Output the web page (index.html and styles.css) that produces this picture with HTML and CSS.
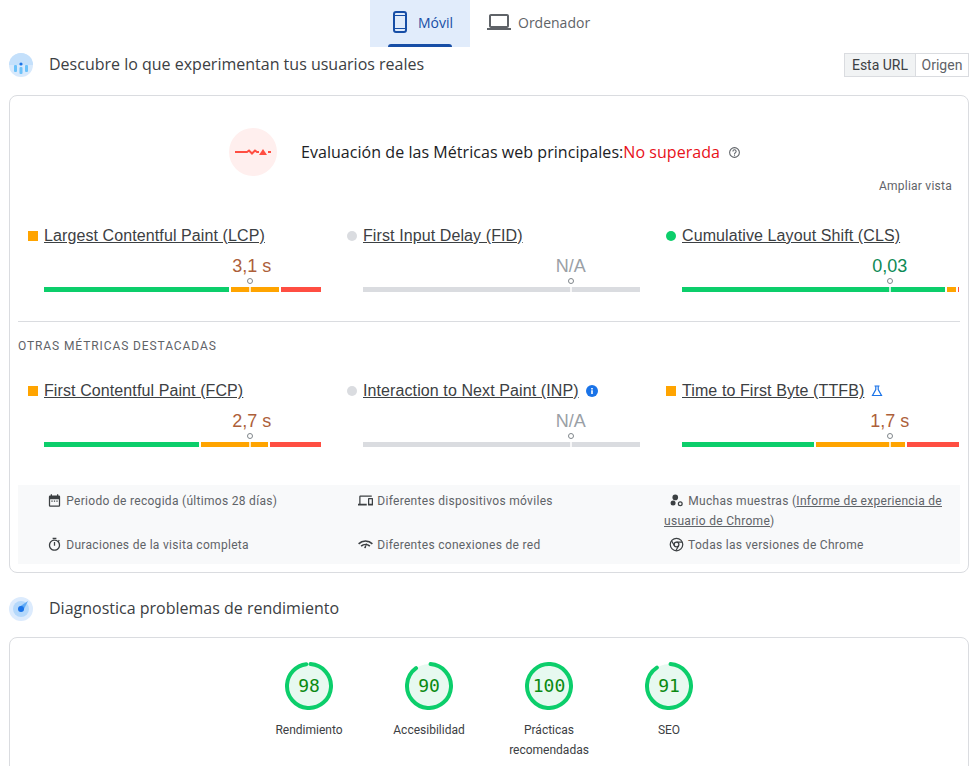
FILE: index.html
```html
<!DOCTYPE html>
<html lang="es">
  <head>
    <meta charset="UTF-8" />
    <title>PageSpeed Insights</title>
    <link rel="stylesheet" href="styles.css">
  </head>
  <body>
    <!-- Device tabs -->
    <nav class="tabs">
      <a class="tab active">
        <svg class="tab-icon" viewBox="0 0 24 24"><rect x="6" y="2" width="12" height="20" rx="2" fill="none" stroke="currentColor" stroke-width="2"/><path d="M6 5.500h12M6 18.500h12" stroke="currentColor" stroke-width="1"/></svg>
        Móvil
      </a>
      <a class="tab">
        <svg class="tab-icon" viewBox="0 0 24 24"><path fill="currentColor" d="M20 18c1.100 0 1.990-.9 1.990-2L22 6c0-1.100-.9-2-2-2H4c-1.100 0-2 .9-2 2v10c0 1.100.9 2 2 2H0v2h24v-2h-4zM4 6h16v10H4V6z"/></svg>
        Ordenador
      </a>
    </nav>

    <!-- Field data -->
    <header class="section-head">
      <svg class="section-icon" viewBox="0 0 24 24">
        <circle cx="12" cy="12" r="12" fill="#d7e9fc"/>
        <path d="M0 12a12 12 0 0 1 24 0z" fill="#c4e0fb"/>
        <circle cx="12" cy="11" r="1.600" fill="#1a73e8"/>
        <rect x="5" y="12" width="3" height="7" rx="1" fill="#6cc2fa"/>
        <rect x="10.500" y="14" width="3" height="7" rx="1" fill="#6cc2fa"/>
        <rect x="16" y="12" width="3" height="7" rx="1" fill="#6cc2fa"/>
      </svg>
      <h2 class="section-title">Descubre lo que experimentan tus usuarios reales</h2>
      <div class="toggle">
        <button class="toggle-btn selected">Esta URL</button>
        <button class="toggle-btn">Origen</button>
      </div>
    </header>

    <section class="card field-card">
      <div class="verdict">
        <svg class="verdict-icon" viewBox="0 0 48 48">
          <circle cx="24" cy="24" r="24" fill="#ffefee"/>
          <path d="M6 24h12l2-1.500 3 3 3-3 2 1.500h2M39 24h3" fill="none" stroke="#ff4e42" stroke-width="2"/>
          <path d="M30 27l4-6 4 6z" fill="#ff4e42"/>
        </svg>
        <span class="verdict-text">Evaluación de las Métricas web principales:<span class="failed">No superada</span></span>
        <svg class="help-icon" viewBox="0 0 24 24"><path fill="#5f6368" d="M11 18h2v-2h-2v2zm1-16a10 10 0 1 0 0 20 10 10 0 0 0 0-20zm0 18a8 8 0 1 1 0-16 8 8 0 0 1 0 16zm0-14a4 4 0 0 0-4 4h2a2 2 0 1 1 4 0c0 2-3 1.750-3 5h2c0-2.250 3-2.500 3-5a4 4 0 0 0-4-4z"/></svg>
      </div>
      <div class="expand">Ampliar vista</div>

      <div class="metrics">
        <div class="metric">
          <div class="metric-label"><i class="mark square"></i><a>Largest Contentful Paint (LCP)</a></div>
          <div class="metric-body">
            <div class="metric-value average" style="--pos: 75%">3,1 s</div>
            <div class="bar">
              <span class="seg good" style="flex-grow: 185"></span><span class="seg avg" style="flex-grow: 48"></span><span class="seg poor" style="flex-grow: 40"></span>
              <i class="pin" style="--pos: 74.5%"></i>
            </div>
          </div>
        </div>
        <div class="metric">
          <div class="metric-label"><i class="mark none"></i><a>First Input Delay (FID)</a></div>
          <div class="metric-body">
            <div class="metric-value empty" style="--pos: 75%">N/A</div>
            <div class="bar">
              <span class="seg blank" style="flex-grow: 1"></span>
              <i class="pin" style="--pos: 75%"></i>
            </div>
          </div>
        </div>
        <div class="metric">
          <div class="metric-label"><i class="mark circle"></i><a>Cumulative Layout Shift (CLS)</a></div>
          <div class="metric-body">
            <div class="metric-value fast" style="--pos: 75%">0,03</div>
            <div class="bar">
              <span class="seg good" style="flex-grow: 263"></span><span class="seg avg" style="flex-grow: 9"></span><span class="seg poor" style="flex-grow: 1"></span>
              <i class="pin" style="--pos: 75%"></i>
            </div>
          </div>
        </div>
      </div>

      <div class="divider"></div>
      <div class="subhead">Otras métricas destacadas</div>

      <div class="metrics metrics-other">
        <div class="metric">
          <div class="metric-label"><i class="mark square"></i><a>First Contentful Paint (FCP)</a></div>
          <div class="metric-body">
            <div class="metric-value average" style="--pos: 75%">2,7 s</div>
            <div class="bar">
              <span class="seg good" style="flex-grow: 155"></span><span class="seg avg" style="flex-grow: 67"></span><span class="seg poor" style="flex-grow: 51"></span>
              <i class="pin" style="--pos: 74.5%"></i>
            </div>
          </div>
        </div>
        <div class="metric">
          <div class="metric-label"><i class="mark none"></i><a>Interaction to Next Paint (INP)</a>
            <svg class="tag-icon" viewBox="0 0 12 12"><circle cx="6" cy="6" r="6" fill="#1a73e8"/><path d="M5.200 5.200h1.600v3.800H5.200zM5.200 3h1.600v1.400H5.200z" fill="#fff"/></svg>
          </div>
          <div class="metric-body">
            <div class="metric-value empty" style="--pos: 75%">N/A</div>
            <div class="bar">
              <span class="seg blank" style="flex-grow: 1"></span>
              <i class="pin" style="--pos: 75%"></i>
            </div>
          </div>
        </div>
        <div class="metric">
          <div class="metric-label"><i class="mark square"></i><a>Time to First Byte (TTFB)</a>
            <svg class="tag-icon" viewBox="0 0 12 12"><path d="M3.500 1h5M4.800 1v3.600L1.500 10.500h9L7.200 4.600V1" fill="none" stroke="#1a73e8" stroke-width="1.200"/></svg>
          </div>
          <div class="metric-body">
            <div class="metric-value average" style="--pos: 75%">1,7 s</div>
            <div class="bar">
              <span class="seg good" style="flex-grow: 132"></span><span class="seg avg" style="flex-grow: 89"></span><span class="seg poor" style="flex-grow: 52"></span>
              <i class="pin" style="--pos: 75%"></i>
            </div>
          </div>
        </div>
      </div>

      <!-- Collection notes -->
      <div class="notes">
        <div class="note">
          <svg class="note-icon" viewBox="0 0 24 24"><path fill="#3c4043" d="M19 4h-1V2h-2v2H8V2H6v2H5a2 2 0 0 0-2 2v14a2 2 0 0 0 2 2h14a2 2 0 0 0 2-2V6a2 2 0 0 0-2-2zm0 16H5V10h14v10z"/><path fill="#3c4043" d="M7 12h2v2H7zM11 12h2v2h-2zM15 12h2v2h-2z"/></svg>
          Periodo de recogida (últimos 28 días)
        </div>
        <div class="note">
          <svg class="note-icon" viewBox="0 0 24 24"><path fill="#3c4043" d="M4 6h18V4H4c-1.100 0-2 .9-2 2v11H0v3h14v-3H4V6zm19 2h-6c-.55 0-1 .45-1 1v10c0 .55.45 1 1 1h6c.55 0 1-.45 1-1V9c0-.55-.45-1-1-1zm-1 9h-4v-7h4v7z"/></svg>
          Diferentes dispositivos móviles
        </div>
        <div class="note">
          <svg class="note-icon" viewBox="0 0 24 24"><circle cx="10" cy="7" r="4.500" fill="#3c4043"/><circle cx="6.500" cy="16" r="4" fill="#3c4043"/><circle cx="18" cy="17" r="3" fill="none" stroke="#3c4043" stroke-width="2"/></svg>
          Muchas muestras (<a>Informe de experiencia de usuario de Chrome</a>)
        </div>
        <div class="note">
          <svg class="note-icon" viewBox="0 0 24 24"><path fill="#3c4043" d="M15 1H9v2h6V1zm-4 13h2V8h-2v6zm8.030-6.610 1.420-1.420c-.43-.51-.9-.99-1.410-1.410l-1.420 1.420A8.962 8.962 0 0 0 12 4c-4.970 0-9 4.030-9 9s4.030 9 9 9 9-4.030 9-9c0-2.120-.74-4.070-1.970-5.610zM12 20c-3.870 0-7-3.130-7-7s3.130-7 7-7 7 3.130 7 7-3.130 7-7 7z"/></svg>
          Duraciones de la visita completa
        </div>
        <div class="note">
          <svg class="note-icon" viewBox="0 0 24 24"><path d="M1 11c6-6 16-6 22 0M5 14.500c4-3.500 10-3.500 14 0" fill="none" stroke="#3c4043" stroke-width="2.500"/><path d="M15 8l-2.200 8a1.500 1.500 0 1 1-2-1z" fill="#3c4043"/></svg>
          Diferentes conexiones de red
        </div>
        <div class="note">
          <svg class="note-icon" viewBox="0 0 24 24"><g fill="none" stroke="#3c4043" stroke-width="2"><circle cx="12" cy="12" r="10"/><circle cx="12" cy="12" r="3.800"/><path d="M12 8.200h9M8.700 14L4 6M15.300 14L11 22"/></g></svg>
          Todas las versiones de Chrome
        </div>
      </div>
    </section>

    <!-- Lab data -->
    <header class="section-head lab-head">
      <svg class="section-icon" viewBox="0 0 24 24">
        <circle cx="12" cy="12" r="12" fill="#dcebfd"/>
        <circle cx="12" cy="12" r="8" fill="#b4d8fb"/>
        <path d="M19 4l-5 10-4-4z" fill="#5ea9f5"/>
        <circle cx="12" cy="12" r="3" fill="#1a73e8"/>
      </svg>
      <h2 class="section-title">Diagnostica problemas de rendimiento</h2>
    </header>

    <section class="card lab-card">
      <div class="gauges">
        <div class="gauge">
          <svg class="gauge-ring" viewBox="0 0 48 48">
            <circle cx="24" cy="24" r="22" class="ring-bg"/>
            <circle cx="24" cy="24" r="22" class="ring" stroke-dasharray="133 139"/>
            <text x="24" y="30" class="gauge-num">98</text>
          </svg>
          <div class="gauge-label">Rendimiento</div>
        </div>
        <div class="gauge">
          <svg class="gauge-ring" viewBox="0 0 48 48">
            <circle cx="24" cy="24" r="22" class="ring-bg"/>
            <circle cx="24" cy="24" r="22" class="ring" stroke-dasharray="122 139"/>
            <text x="24" y="30" class="gauge-num">90</text>
          </svg>
          <div class="gauge-label">Accesibilidad</div>
        </div>
        <div class="gauge">
          <svg class="gauge-ring" viewBox="0 0 48 48">
            <circle cx="24" cy="24" r="22" class="ring-bg"/>
            <circle cx="24" cy="24" r="22" class="ring" stroke-dasharray="139 139"/>
            <text x="24" y="30" class="gauge-num">100</text>
          </svg>
          <div class="gauge-label">Prácticas recomendadas</div>
        </div>
        <div class="gauge">
          <svg class="gauge-ring" viewBox="0 0 48 48">
            <circle cx="24" cy="24" r="22" class="ring-bg"/>
            <circle cx="24" cy="24" r="22" class="ring" stroke-dasharray="123 139"/>
            <text x="24" y="30" class="gauge-num">91</text>
          </svg>
          <div class="gauge-label">SEO</div>
        </div>
      </div>
    </section>
  </body>
</html>
```

FILE: styles.css
```css
html {
  overflow: hidden;
}

body {
  margin: 0;
  padding: 0 3px 0 9px;
  height: 100vh;
  overflow: hidden;
  font-family: "Liberation Sans", Arial, sans-serif;
  color: #202124;
  background: #fff;
}

/* Tabs */
.tabs {
  display: flex;
  justify-content: center;
  height: 47px;
  margin-bottom: 6px;
  padding-left: 2px;
}

.tab {
  display: flex;
  align-items: center;
  gap: 7px;
  position: relative;
  box-sizing: border-box;
  width: 140px;
  padding: 0 0 3px 17px;
  font-family: "Open Sans", sans-serif;
  font-size: 14px;
  font-weight: 500;
  color: #5f6368;
}

.tab.active {
  width: 100px;
  padding: 0 0 3px 18px;
  background: #e1ecfb;
  color: #174ea6;
  gap: 6px;
}

.tab.active::after {
  content: "";
  position: absolute;
  left: 18px;
  width: 64px;
  bottom: 0;
  height: 3px;
  background: #174ea6;
  border-radius: 3px 3px 0 0;
}

.tab-icon {
  width: 24px;
  height: 24px;
}

/* Section heads */
.section-head {
  display: flex;
  align-items: center;
  height: 24px;
}

.lab-head {
  margin-top: 24px;
}

.section-icon {
  width: 24px;
  height: 24px;
  margin-right: 16px;
}

.section-title {
  flex-grow: 1;
  margin: 0 0 2px;
  font-family: "Open Sans", sans-serif;
  font-size: 16px;
  font-weight: 400;
  color: #3c4043;
}

.toggle {
  display: flex;
}

.toggle-btn {
  box-sizing: border-box;
  width: 54px;
  height: 24px;
  padding: 0;
  border: 1px solid #dadce0;
  background: #fff;
  font-family: Roboto, sans-serif;
  font-size: 14px;
  color: #5f6368;
}

.toggle-btn.selected {
  width: 71px;
  background: #f1f3f4;
  color: #3c4043;
  border-right: none;
}

/* Cards */
.card {
  margin-top: 18px;
  border: 1px solid #dadce0;
  border-radius: 8px;
  padding: 0 8px;
}

.field-card {
  height: 476px;
}

.lab-card {
  margin-top: 16px;
  height: 200px;
}

/* Verdict */
.verdict {
  display: flex;
  align-items: center;
  justify-content: center;
  padding: 32px 8px 0 0;
}

.verdict-icon {
  width: 48px;
  height: 48px;
  margin-right: 24px;
}

.verdict-text {
  font-family: "Open Sans", sans-serif;
  font-size: 16px;
  font-weight: 500;
  letter-spacing: 0.05px;
}

.failed {
  color: #e8111a;
}

.help-icon {
  width: 13px;
  height: 13px;
  margin-left: 8px;
}

.expand {
  margin: 2px 8px 0 0;
  text-align: right;
  font-family: Roboto, sans-serif;
  font-size: 12px;
  line-height: 16px;
  letter-spacing: 0.25px;
  color: #5f6368;
}

/* Metrics */
.metrics {
  display: grid;
  grid-template-columns: repeat(3, 1fr);
  column-gap: 26px;
  padding: 0 1px 0 10px;
  margin-top: 32px;
}

.metrics-other {
  margin-top: 27px;
}

.metric-label {
  display: flex;
  align-items: center;
  height: 20px;
  font-size: 16px;
  letter-spacing: 0.1px;
  color: #3c4043;
}

.metric-label a {
  text-decoration: underline;
}

.mark {
  flex: none;
  width: 10px;
  height: 10px;
  margin-right: 6px;
}

.mark.square {
  background: #ffa400;
}

.mark.circle {
  background: #0cce6b;
  border-radius: 50%;
}

.mark.none {
  background: #dadce0;
  border-radius: 50%;
}

.tag-icon {
  width: 12px;
  height: 12px;
  margin-left: 7px;
}

.metric-body {
  margin-left: 16px;
}

.metric-value {
  width: fit-content;
  margin-top: 9px;
  margin-left: var(--pos);
  transform: translateX(-50%);
  font-size: 18px;
  line-height: 22px;
}

.metric-value.average {
  color: #ad5f3a;
}

.metric-value.fast {
  color: #0d8a55;
}

.metric-value.empty {
  color: #9aa0a6;
}

.bar {
  display: flex;
  gap: 2px;
  position: relative;
  margin-top: 10px;
  height: 5px;
}

.seg {
  display: block;
  flex-basis: 0;
}

.seg.good {
  background: #0cce6b;
}

.seg.avg {
  background: #ffa400;
}

.seg.poor {
  background: #ff4e42;
}

.seg.blank {
  background: #dadce0;
}

/* marker above the bar */
.pin {
  position: absolute;
  left: var(--pos);
  top: -9px;
  width: 4px;
  height: 14px;
  margin-left: -2px;
}

.pin::before {
  content: "";
  position: absolute;
  left: -1px;
  top: 0;
  width: 4px;
  height: 4px;
  border: 1px solid #80868b;
  border-radius: 50%;
  background: #fff;
}

.pin::after {
  content: "";
  position: absolute;
  left: 1px;
  top: 6px;
  width: 2px;
  height: 8px;
  background: rgba(255, 255, 255, 0.75);
}

.divider {
  margin-top: 29px;
  border-top: 1px solid #dadce0;
}

.subhead {
  margin-top: 16px;
  font-family: Roboto, sans-serif;
  font-size: 12px;
  line-height: 16px;
  letter-spacing: 0.9px;
  text-transform: uppercase;
  color: #5f6368;
}

.metrics + .notes {
  margin-top: 38px;
}

/* Notes */
.notes {
  display: grid;
  grid-template-columns: repeat(3, 311px);
  row-gap: 4px;
  padding: 6px 0 9px 24px;
  background: #f8f9fa;
  font-family: Roboto, sans-serif;
  font-size: 12px;
  line-height: 20px;
  letter-spacing: 0.3px;
  color: #5f6368;
}

.note a {
  text-decoration: underline;
}

.note-icon {
  width: 15px;
  height: 15px;
  margin: 0 1px 0 5px;
  vertical-align: -3px;
}

/* Gauges */
.gauges {
  display: flex;
  justify-content: center;
  padding-top: 24px;
}

.gauge {
  width: 120px;
  text-align: center;
}

.gauge-ring {
  display: block;
  width: 48px;
  height: 48px;
  margin: 0 auto 10px;
}

.ring-bg {
  fill: #e7f9f0;
  stroke: none;
}

.ring {
  fill: none;
  stroke: #0cce6b;
  stroke-width: 4;
  stroke-linecap: round;
  transform: rotate(-86deg);
  transform-origin: 24px 24px;
}

.gauge-num {
  font-family: "DejaVu Sans Mono", monospace;
  font-size: 18px;
  fill: #0a8a12;
  text-anchor: middle;
}

.gauge-label {
  width: 100px;
  margin: 0 auto;
  font-family: Roboto, sans-serif;
  font-size: 12px;
  line-height: 20px;
  color: #3c4043;
}
```
